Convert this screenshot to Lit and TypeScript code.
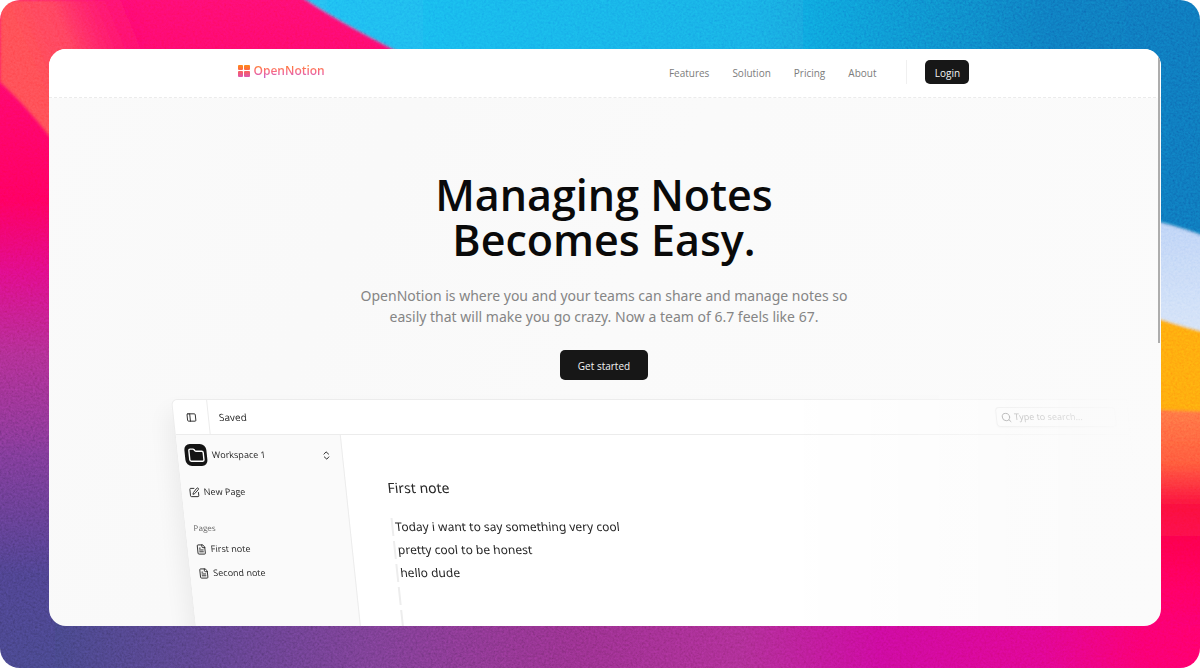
import { LitElement, html, css, svg } from "lit";
import { customElement, property } from "lit/decorators.js";

const font = css`"Open Sans", "Noto Sans", sans-serif`;
const bodyFont = css`"Noto Sans", "Open Sans", sans-serif`;

const icons: Record<string, unknown> = {
  panel: svg`<rect x="3" y="4" width="18" height="16" rx="2"/><path d="M9 4v16"/>`,
  folder: svg`<path d="M20 20a2 2 0 0 0 2-2V8a2 2 0 0 0-2-2h-7.9a2 2 0 0 1-1.7-.9L9.600 3.900A2 2 0 0 0 7.900 3H4a2 2 0 0 0-2 2v13a2 2 0 0 0 2 2Z"/>`,
  updown: svg`<path d="m7 15 5 5 5-5"/><path d="m7 9 5-5 5 5"/>`,
  edit: svg`<path d="M12 3H5a2 2 0 0 0-2 2v14a2 2 0 0 0 2 2h14a2 2 0 0 0 2-2v-7"/><path d="M18.400 2.600a2.100 2.100 0 0 1 3 3l-9 9a2 2 0 0 1-.9.5l-2.900.9.9-2.900a2 2 0 0 1 .5-.9Z"/>`,
  file: svg`<path d="M15 2H6a2 2 0 0 0-2 2v16a2 2 0 0 0 2 2h12a2 2 0 0 0 2-2V7Z"/><path d="M14 2v4a2 2 0 0 0 2 2h4"/><path d="M10 9H8"/><path d="M16 13H8"/><path d="M16 17H8"/>`,
  search: svg`<circle cx="11" cy="11" r="8"/><path d="m21 21-4.300-4.300"/>`,
};

@customElement("ui-icon")
class UiIcon extends LitElement {
  @property() name = "file";
  static styles = css`
    :host { display: inline-flex; flex: none; width: 11px; height: 11px; }
    svg { width: 100%; height: 100%; fill: none; stroke: currentColor; stroke-width: 2; stroke-linecap: round; stroke-linejoin: round; }
  `;
  render() {
    return html`<svg viewBox="0 0 24 24" aria-hidden="true">${icons[this.name]}</svg>`;
  }
}

@customElement("wall-paper")
class WallPaper extends LitElement {
  static styles = css`
    :host { display: block; }
    svg { display: block; width: 100%; height: 100%; }
    .grain { mix-blend-mode: overlay; }
  `;
  render() {
    return html`<svg viewBox="0 0 1200 668" preserveAspectRatio="none" aria-hidden="true">
      <defs>
        <linearGradient id="left" x1="0" y1="0" x2="0" y2="1">
          <stop offset="0" stop-color="#ff0c68"/><stop offset=".3" stop-color="#ff0058"/>
          <stop offset=".41" stop-color="#dc0c7c"/><stop offset=".53" stop-color="#a82a86"/>
          <stop offset=".68" stop-color="#73358a"/><stop offset=".86" stop-color="#463c80"/>
          <stop offset="1" stop-color="#41407e"/>
        </linearGradient>
        <linearGradient id="coral" gradientUnits="userSpaceOnUse" x1="30" y1="70" x2="150" y2="20">
          <stop offset="0" stop-color="#ff474d"/><stop offset=".35" stop-color="#ff3d56"/>
          <stop offset="1" stop-color="#ff0c68" stop-opacity="0"/>
        </linearGradient>
        <linearGradient id="sky" x1="0" y1="0" x2="1" y2="0">
          <stop offset="0" stop-color="#22b8f2"/><stop offset=".2" stop-color="#16afea"/>
          <stop offset=".5" stop-color="#14a5e2"/><stop offset=".66" stop-color="#0c88cc"/>
          <stop offset=".82" stop-color="#0b70b8"/><stop offset="1" stop-color="#0e6cb4"/>
        </linearGradient>
        <linearGradient id="base" x1="0" y1="0" x2="1" y2="0">
          <stop offset="0" stop-color="#40407c"/><stop offset=".12" stop-color="#533d80"/>
          <stop offset=".28" stop-color="#713986"/><stop offset=".46" stop-color="#8c2c80"/>
          <stop offset=".6" stop-color="#a42a88"/><stop offset=".72" stop-color="#c60a92"/>
          <stop offset=".86" stop-color="#dc0684"/><stop offset=".95" stop-color="#fa0068"/>
          <stop offset="1" stop-color="#ff0062"/>
        </linearGradient>
        <linearGradient id="ice" x1="0" y1="0" x2="0" y2="1">
          <stop offset="0" stop-color="#b4cdf5"/><stop offset="1" stop-color="#d3e2f8"/>
        </linearGradient>
        <linearGradient id="red" x1="0" y1="0" x2="0" y2="1">
          <stop offset="0" stop-color="#ff6c3e"/><stop offset=".25" stop-color="#ff5136"/>
          <stop offset=".46" stop-color="#fb0a38"/><stop offset=".8" stop-color="#ff0058"/>
          <stop offset="1" stop-color="#fc0066"/>
        </linearGradient>
        <filter id="soft" x="-10%" y="-10%" width="120%" height="120%"><feGaussianBlur stdDeviation="1.5"/></filter>
        <filter id="grain" x="0" y="0" width="100%" height="100%">
          <feTurbulence type="fractalNoise" baseFrequency=".45" numOctaves="3" seed="4"/>
          <feColorMatrix type="saturate" values="0"/>
          <feComponentTransfer><feFuncA type="linear" slope="0" intercept="1"/></feComponentTransfer>
        </filter>
        <clipPath id="frame"><rect width="1200" height="668" rx="20"/></clipPath>
      </defs>
      <g clip-path="url(#frame)">
        <rect width="1200" height="668" fill="url(#left)"/>
        <rect x="55" y="600" width="1145" height="68" fill="url(#base)"/>
        <path d="M0 0H180L60 150C40 124 24 104 0 82Z" fill="url(#coral)" filter="url(#soft)"/>
        <path d="M286 -12L306 0Q345 26 430 68H1150V240H1220V-12Z" fill="url(#sky)" filter="url(#soft)"/>
        <path d="M1140 218Q1175 224 1220 242V345H1140Z" fill="url(#ice)" filter="url(#soft)"/>
        <path d="M1140 312Q1175 326 1220 336V420H1140Z" fill="#ffa00e" filter="url(#soft)"/>
        <path d="M1140 409L1220 412V626H1140Z" fill="url(#red)" filter="url(#soft)"/>
        <rect class="grain" width="1200" height="668" filter="url(#grain)" opacity=".34"/>
      </g>
    </svg>`;
  }
}

@customElement("site-header")
class SiteHeader extends LitElement {
  static styles = css`
    :host { display: block; background: #fff; border-bottom: 1px dashed #ebebeb; padding-right: 3px; font-family: ${font}; }
    .inner { width: 66%; margin: 0 auto; height: 48px; display: flex; align-items: center; justify-content: space-between; }
    .logo { display: flex; align-items: center; gap: 4px; text-decoration: none; padding-bottom: 4px; }
    .logo svg { width: 12px; height: 12px; }
    .name { font-size: 12px; line-height: 16px; font-weight: 600; color: transparent;
      background: linear-gradient(#ff8420 10%, #fb6a7c 50%, #c85fd8 95%); background-clip: text; -webkit-background-clip: text; }
    .right { display: flex; align-items: center; padding-bottom: 2px; }
    nav { display: flex; gap: 23px; padding-right: 30px; }
    nav a { font-size: 10px; line-height: 16px; color: #7c7c7c; text-decoration: none; padding-top: 2px; }
    .login { border-left: 1px solid #f0f0f0; padding-left: 18px; display: flex; }
    button { font: 400 10px/16px ${font}; color: #f4f4f4; background: #171717; border: 0; border-radius: 5px; height: 24px; width: 44px; padding: 1px 0 0; }
  `;
  render() {
    return html`<div class="inner">
      <a class="logo" href="#">
        <svg viewBox="0 0 12 12" aria-hidden="true">
          <defs><linearGradient id="g" gradientUnits="userSpaceOnUse" x1="0" y1="0" x2="0" y2="12">
            <stop offset="0" stop-color="#ff8a14"/><stop offset=".5" stop-color="#fb5f58"/><stop offset="1" stop-color="#dc56b0"/>
          </linearGradient></defs>
          <g fill="url(#g)"><rect width="5" height="5" rx="1"/><rect x="6" width="6" height="5" rx="1"/><rect y="6" width="5" height="6" rx="1"/><rect x="6" y="6" width="6" height="6" rx="1"/></g>
        </svg>
        <span class="name">OpenNotion</span>
      </a>
      <div class="right">
        <nav>${["Features", "Solution", "Pricing", "About"].map((t) => html`<a href="#">${t}</a>`)}</nav>
        <div class="login"><button>Login</button></div>
      </div>
    </div>`;
  }
}

@customElement("notes-preview")
class NotesPreview extends LitElement {
  static styles = css`
    :host { display: block; font-family: ${font}; color: #262626; }
    .fade { padding: 19px 3% 0 11%; -webkit-mask-image: linear-gradient(to right, #000 62%, transparent 98%); mask-image: linear-gradient(to right, #000 62%, transparent 98%); }
    .panel { transform: skewX(6deg); transform-origin: 0 0; height: 400px; display: grid; grid-template: 35px 1fr / 165px 1fr;
      background: #fff; border: 1px solid #ececec; border-radius: 6px 0 0 0; box-shadow: -6px 12px 22px rgba(0,0,0,.06); overflow: hidden; }
    button, .page { font: 9px/16px ${font}; color: inherit; background: none; border: 0; padding: 0; text-decoration: none; display: flex; align-items: center; }
    .bar { grid-column: 1 / -1; display: flex; align-items: center; border-bottom: 1px solid #ececec; font-size: 10px; line-height: 16px; }
    .toggle { width: 35px; align-self: stretch; justify-content: center; border-right: 1px solid #ececec; }
    .saved { padding-left: 10px; flex: 1; }
    .search { display: flex; align-items: center; gap: 2px; width: 120px; height: 20px; padding-left: 4px; margin-right: 12px; border: 1px solid #e0e0e0; border-radius: 4px; box-sizing: border-box; box-shadow: 0 1px 2px rgba(0,0,0,.06); color: #333; }
    input { font: 9px/16px ${font}; border: 0; padding: 0; width: 90px; background: none; outline: none; }
    input::placeholder { color: #444; }
    aside { background: #fafafa; border-right: 1px solid #ececec; padding: 9px 10px 0 7px; }
    .workspace { width: 100%; gap: 5px; height: 22px; }
    .workspace .grow { flex: 1; text-align: left; }
    .badge { width: 22px; height: 22px; border-radius: 6px; background: #141414; color: #fff; display: flex; align-items: center; justify-content: center; }
    .badge ui-icon { width: 17px; height: 17px; }
    .new { margin-top: 18px; gap: 4px; }
    .label { font-size: 8px; line-height: 12px; color: #666; margin: 22px 0 7px 1px; font-weight: 400; }
    .page { gap: 4px; padding-left: 1px; margin-bottom: 8px; }
    main { padding: 42px 0 0 41px; }
    h2 { margin: 0 0 19px; font: 400 14px/22px ${bodyFont}; }
    .line { height: 18px; margin-bottom: 5px; border-left: 2px solid #ededed; padding-left: 2px; font: 12px/18px ${bodyFont}; }
  `;
  render() {
    return html`<div class="fade"><div class="panel">
      <div class="bar">
        <button class="toggle" aria-label="Toggle sidebar"><ui-icon name="panel"></ui-icon></button>
        <span class="saved">Saved</span>
        <label class="search"><ui-icon name="search"></ui-icon><input type="search" aria-label="Search" placeholder="Type to search..." /></label>
      </div>
      <aside>
        <button class="workspace"><span class="badge"><ui-icon name="folder"></ui-icon></span><span class="grow">Workspace 1</span><ui-icon name="updown"></ui-icon></button>
        <button class="new"><ui-icon name="edit"></ui-icon>New Page</button>
        <h3 class="label">Pages</h3>
        ${["First note", "Second note"].map((t) => html`<a class="page" href="#"><ui-icon name="file"></ui-icon>${t}</a>`)}
      </aside>
      <main>
        <h2>First note</h2>
        ${["Today i want to say something very cool", "pretty cool to be honest", "hello dude", "", "", ""].map((t) => html`<div class="line">${t}</div>`)}
      </main>
    </div></div>`;
  }
}

@customElement("app-root")
class AppRoot extends LitElement {
  static styles = css`
    :host { display: block; font-family: ${font}; background: #fff; }
    .stage { position: relative; height: 100vh; box-sizing: border-box; padding: 49px 39px 42px 49px; display: flex; }
    wall-paper { position: absolute; inset: 0; }
    .window { position: relative; flex: 1; min-width: 0; border-radius: 17px; overflow: hidden; background: linear-gradient(115deg, #fafafa, #f9f9f9 28%, #fafafa 50%, #fbfbfb); }
    .thumb { position: absolute; right: 1px; top: 8px; width: 2px; height: 286px; background: #adadad; }
    .hero { text-align: center; padding: 74px 2px 0 0; }
    h1 { margin: 0; font-size: 43px; line-height: 45px; font-weight: 600; color: #0a0a0a; }
    p { margin: 23px 0; font: 14px/21px ${bodyFont}; color: #858585; }
    .cta { font: 400 10px/16px ${font}; color: #f4f4f4; background: #171717; border: 0; border-radius: 5px; width: 88px; height: 30px; padding: 1px 0 0; display: block; margin: 0 auto; }
  `;
  render() {
    return html`<div class="stage">
      <wall-paper></wall-paper>
      <div class="window">
        <site-header></site-header>
        <section class="hero">
          <h1>Managing Notes<br />Becomes Easy.</h1>
          <p>OpenNotion is where you and your teams can share and manage notes so<br />easily that will make you go crazy. Now a team of 6.7 feels like 67.</p>
          <button class="cta">Get started</button>
        </section>
        <notes-preview></notes-preview>
        <div class="thumb"></div>
      </div>
    </div>`;
  }
}
